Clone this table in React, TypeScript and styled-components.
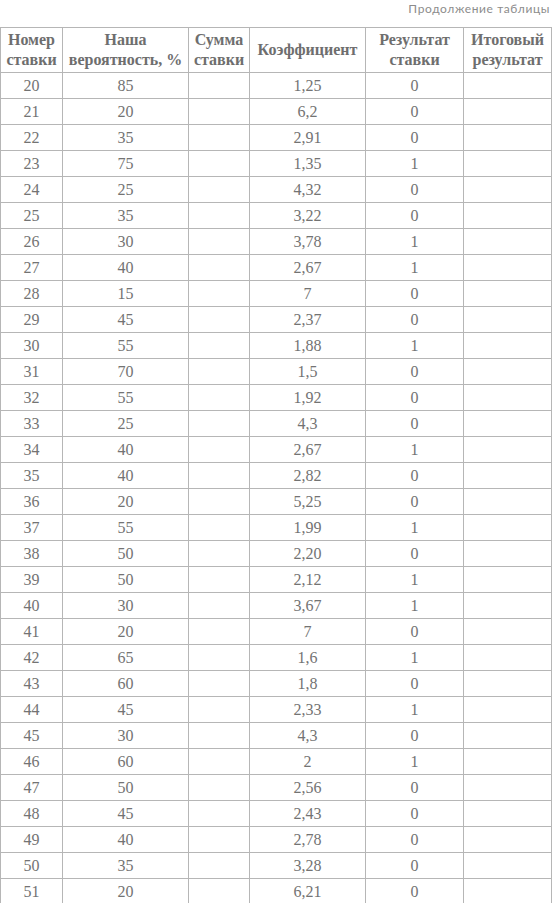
import React from "react";
import styled, { createGlobalStyle } from "styled-components";

type Row = [number, number, string, number];

const rows: Row[] = [
  [20, 85, "1,25", 0],
  [21, 20, "6,2", 0],
  [22, 35, "2,91", 0],
  [23, 75, "1,35", 1],
  [24, 25, "4,32", 0],
  [25, 35, "3,22", 0],
  [26, 30, "3,78", 1],
  [27, 40, "2,67", 1],
  [28, 15, "7", 0],
  [29, 45, "2,37", 0],
  [30, 55, "1,88", 1],
  [31, 70, "1,5", 0],
  [32, 55, "1,92", 0],
  [33, 25, "4,3", 0],
  [34, 40, "2,67", 1],
  [35, 40, "2,82", 0],
  [36, 20, "5,25", 0],
  [37, 55, "1,99", 1],
  [38, 50, "2,20", 0],
  [39, 50, "2,12", 1],
  [40, 30, "3,67", 1],
  [41, 20, "7", 0],
  [42, 65, "1,6", 1],
  [43, 60, "1,8", 0],
  [44, 45, "2,33", 1],
  [45, 30, "4,3", 0],
  [46, 60, "2", 1],
  [47, 50, "2,56", 0],
  [48, 45, "2,43", 0],
  [49, 40, "2,78", 0],
  [50, 35, "3,28", 0],
  [51, 20, "6,21", 0],
];

const columns = [62, 126, 61, 116, 98, 88];

const serif = `"Liberation Serif", "DejaVu Serif", serif`;

const GlobalStyle = createGlobalStyle`
  html, body {
    margin: 0;
    padding: 0;
    background: #fff;
  }
  body {
    width: 552px;
    height: 903px;
    overflow: hidden;
  }
`;

const Page = styled.div`
  display: flex;
  flex-direction: column;
`;

const Caption = styled.div`
  height: 27px;
  display: flex;
  justify-content: flex-end;
  padding: 2px 2px 0 0;
  box-sizing: border-box;
  font-family: Lato, "DejaVu Sans", sans-serif;
  font-size: 12px;
  letter-spacing: 0.6px;
  line-height: 13px;
  color: #8c8c8c;
`;

const Table = styled.table`
  border-collapse: collapse;
  table-layout: fixed;
  width: 552px;
`;

const HeadCell = styled.th`
  border: 1px solid #b6b6b6;
  height: 44px;
  padding: 0 2px;
  font-family: ${serif};
  font-size: 16px;
  font-weight: 700;
  line-height: 20px;
  color: #6e6e6e;
  text-align: center;
  vertical-align: middle;
`;

const Cell = styled.td`
  border: 1px solid #b6b6b6;
  height: 25px;
  padding: 0;
  font-family: ${serif};
  font-size: 16px;
  line-height: 20px;
  color: #737373;
  text-align: center;
  vertical-align: middle;
`;

export default function App() {
  return (
    <Page>
      <GlobalStyle />
      <Caption>Продолжение таблицы</Caption>
      <Table>
        <colgroup>
          {columns.map((w, i) => (
            <col key={i} style={{ width: w }} />
          ))}
        </colgroup>
        <thead>
          <tr>
            <HeadCell>
              Номер
              <br />
              ставки
            </HeadCell>
            <HeadCell>
              Наша
              <br />
              вероятность, %
            </HeadCell>
            <HeadCell>
              Сумма
              <br />
              ставки
            </HeadCell>
            <HeadCell>Коэффициент</HeadCell>
            <HeadCell>
              Результат
              <br />
              ставки
            </HeadCell>
            <HeadCell>
              Итоговый
              <br />
              результат
            </HeadCell>
          </tr>
        </thead>
        <tbody>
          {rows.map(([n, p, k, r]) => (
            <tr key={n}>
              <Cell>{n}</Cell>
              <Cell>{p}</Cell>
              <Cell />
              <Cell>{k}</Cell>
              <Cell>{r}</Cell>
              <Cell />
            </tr>
          ))}
        </tbody>
      </Table>
    </Page>
  );
}
